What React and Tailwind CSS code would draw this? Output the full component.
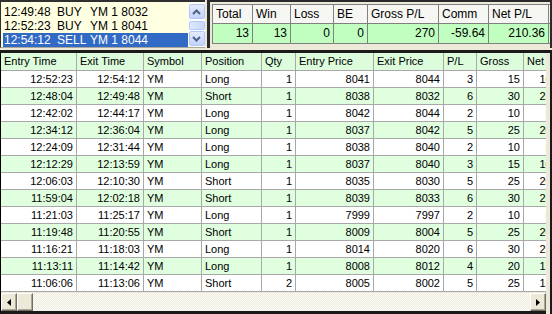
const trades = [
  ["12:52:23", "12:54:12", "YM", "Long", 1, 8041, 8044, 3, 15, "10.41"],
  ["12:48:04", "12:49:48", "YM", "Short", 1, 8038, 8032, 6, 30, "25.41"],
  ["12:42:02", "12:44:17", "YM", "Long", 1, 8042, 8044, 2, 10, "5.41"],
  ["12:34:12", "12:36:04", "YM", "Long", 1, 8037, 8042, 5, 25, "20.41"],
  ["12:24:09", "12:31:44", "YM", "Long", 1, 8038, 8040, 2, 10, "5.41"],
  ["12:12:29", "12:13:59", "YM", "Long", 1, 8037, 8040, 3, 15, "10.41"],
  ["12:06:03", "12:10:30", "YM", "Short", 1, 8035, 8030, 5, 25, "20.41"],
  ["11:59:04", "12:02:18", "YM", "Short", 1, 8039, 8033, 6, 30, "25.41"],
  ["11:21:03", "11:25:17", "YM", "Long", 1, 7999, 7997, 2, 10, "5.41"],
  ["11:19:48", "11:20:55", "YM", "Short", 1, 8009, 8004, 5, 25, "20.41"],
  ["11:16:21", "11:18:03", "YM", "Long", 1, 8014, 8020, 6, 30, "25.41"],
  ["11:13:11", "11:14:42", "YM", "Long", 1, 8008, 8012, 4, 20, "15.41"],
  ["11:06:06", "11:13:06", "YM", "Short", 2, 8005, 8002, 5, 25, "15.82"],
];

// header label, width (incl. right grid line), align
const cols = [
  ["Entry Time", "w-[76px]", "text-right"],
  ["Exit Time", "w-[67px]", "text-right"],
  ["Symbol", "w-[58px]", "text-left"],
  ["Position", "w-[60px]", "text-left"],
  ["Qty", "w-[34px]", "text-right"],
  ["Entry Price", "w-[78px]", "text-right"],
  ["Exit Price", "w-[70px]", "text-right"],
  ["P/L", "w-[33px]", "text-right"],
  ["Gross", "w-[47px]", "text-right"],
  ["Net", "w-[47px]", "text-right"],
];

const summary = [
  ["Total", "13", "w-[40px]"],
  ["Win", "13", "w-[38px]"],
  ["Loss", "0", "w-[43px]"],
  ["BE", "0", "w-[34px]"],
  ["Gross P/L", "270", "w-[71px]"],
  ["Comm", "-59.64", "w-[50px]"],
  ["Net P/L", "210.36", "w-[60px]"],
  ["", "", "w-[20px]"],
];

const orders = [
  ["12:49:48", "BUY", "YM 1 8032"],
  ["12:52:23", "BUY", "YM 1 8041"],
  ["12:54:12", "SELL", "YM 1 8044"],
];

function Chevron({ up }) {
  return (
    <svg width="9" height="6" viewBox="0 0 9 6">
      <path
        d={up ? "M1 5 L4.5 1.5 L8 5" : "M1 1 L4.5 4.5 L8 1"}
        fill="none"
        stroke="#4d6185"
        strokeWidth="2"
      />
    </svg>
  );
}

function XpButton({ up }) {
  return (
    <div className="h-[15px] w-[16px] rounded-[2px] border border-[#b4c8f6] bg-gradient-to-b from-[#e3ebfe] to-[#c2d3fc] flex items-center justify-center">
      <Chevron up={up} />
    </div>
  );
}

function Arrow({ left }) {
  return (
    <svg width="4" height="7" viewBox="0 0 4 7">
      <path d={left ? "M4 0 L0 3.5 L4 7 Z" : "M0 0 L4 3.5 L0 7 Z"} fill="#000" />
    </svg>
  );
}

const raised =
  "bg-[#ece9d8] border border-t-white border-l-white border-r-[#716f64] border-b-[#716f64] shadow-[inset_-1px_-1px_0_#aca899]";

export default function App() {
  return (
    <div className="w-[552px] h-[314px] overflow-hidden bg-[#ece9d8] font-['Liberation_Sans',Arial,sans-serif] text-black flex flex-col">
      {/* top strip: pending orders list + summary */}
      <div className="h-[50px] flex shrink-0">
        <div className="w-[205px] h-[48px] border-t-2 border-l border-[#303030] border-b border-b-[#aca899] bg-[#ffffe1] flex">
          <div className="flex-1 pt-[3px] pl-[2px] text-[12px] leading-[14px]">
            {orders.map((o, i) => (
              <div
                key={i}
                className={`flex h-[14px] ${i === 2 ? "bg-[#316ac5] text-white" : ""}`}
              >
                <span className="w-[54px] pl-[1px]">{o[0]}</span>
                <span className="w-[33px]">{o[1]}</span>
                <span>{o[2]}</span>
              </div>
            ))}
          </div>
          <div className="w-[17px] bg-[#fcfcf9] flex flex-col items-center justify-between pt-[2px] pb-[1px]">
            <XpButton up />
            <div className="h-[9px] w-[16px] rounded-[2px] border border-[#b4c8f6] bg-gradient-to-r from-[#dfe8fe] to-[#c6d6fd]" />
            <XpButton />
          </div>
        </div>
        <div className="ml-[2px] flex-1 h-[48px] border-t-2 border-l-[3px] border-r-2 border-[#2a2a2a] pl-[2px] pt-[2px] overflow-hidden">
          <div className="flex text-[12px] leading-[18px] border-l border-t border-[#808080]">
            {summary.map(([h, v, w], i) => (
              <div key={i} className={`${w} shrink-0 flex flex-col`}>
                <div className="h-[19px] bg-[#f6f6f3] border-r border-b border-[#808080] px-[3px]">{h}</div>
                <div className="h-[20px] bg-[#c0ffc0] border-r border-b border-[#808080] px-[3px] text-right leading-[19px]">{v}</div>
              </div>
            ))}
          </div>
        </div>
      </div>

      {/* trades grid */}
      <div className="flex-1 border-t-[3px] border-[#1a1a1a] flex">
        <div className="w-[546px] border-l border-black border-b-[3px] border-b-[#1a1a1a] flex flex-col overflow-hidden">
          <div className="flex-1 overflow-hidden text-[11px]">
            <div className="flex h-[18px] bg-[#dcfcdc] leading-[17px]">
              {cols.map(([h, w], i) => (
                <div key={i} className={`${w} shrink-0 border-r border-b border-[#a8a8a8] px-[3px] whitespace-nowrap`}>
                  {h}
                </div>
              ))}
            </div>
            {trades.map((t, r) => (
              <div
                key={r}
                className={`flex h-[17px] leading-[16px] ${r % 2 ? "bg-[#dfffdf]" : "bg-white"}`}
              >
                {t.map((v, i) => (
                  <div
                    key={i}
                    className={`${cols[i][1]} ${cols[i][2]} shrink-0 border-r border-b border-[#a8a8a8] px-[3px] whitespace-nowrap`}
                  >
                    {v}
                  </div>
                ))}
              </div>
            ))}
          </div>
          <div className="h-[18px] flex shrink-0 bg-[repeating-conic-gradient(#ece9d8_0_25%,#ffffff_0_50%)] bg-[length:2px_2px]">
            <div className={`w-[16px] h-[18px] ${raised} flex items-center justify-center`}>
              <Arrow left />
            </div>
            <div className={`w-[16px] h-[18px] ${raised}`} />
            <div className="flex-1" />
            <div className={`w-[16px] h-[18px] ${raised} flex items-center justify-center`}>
              <Arrow />
            </div>
          </div>
        </div>
        <div className="w-[4px] bg-[#ece9d8]" />
        <div className="w-[2px] bg-[#1a1a1a]" />
      </div>
    </div>
  );
}
